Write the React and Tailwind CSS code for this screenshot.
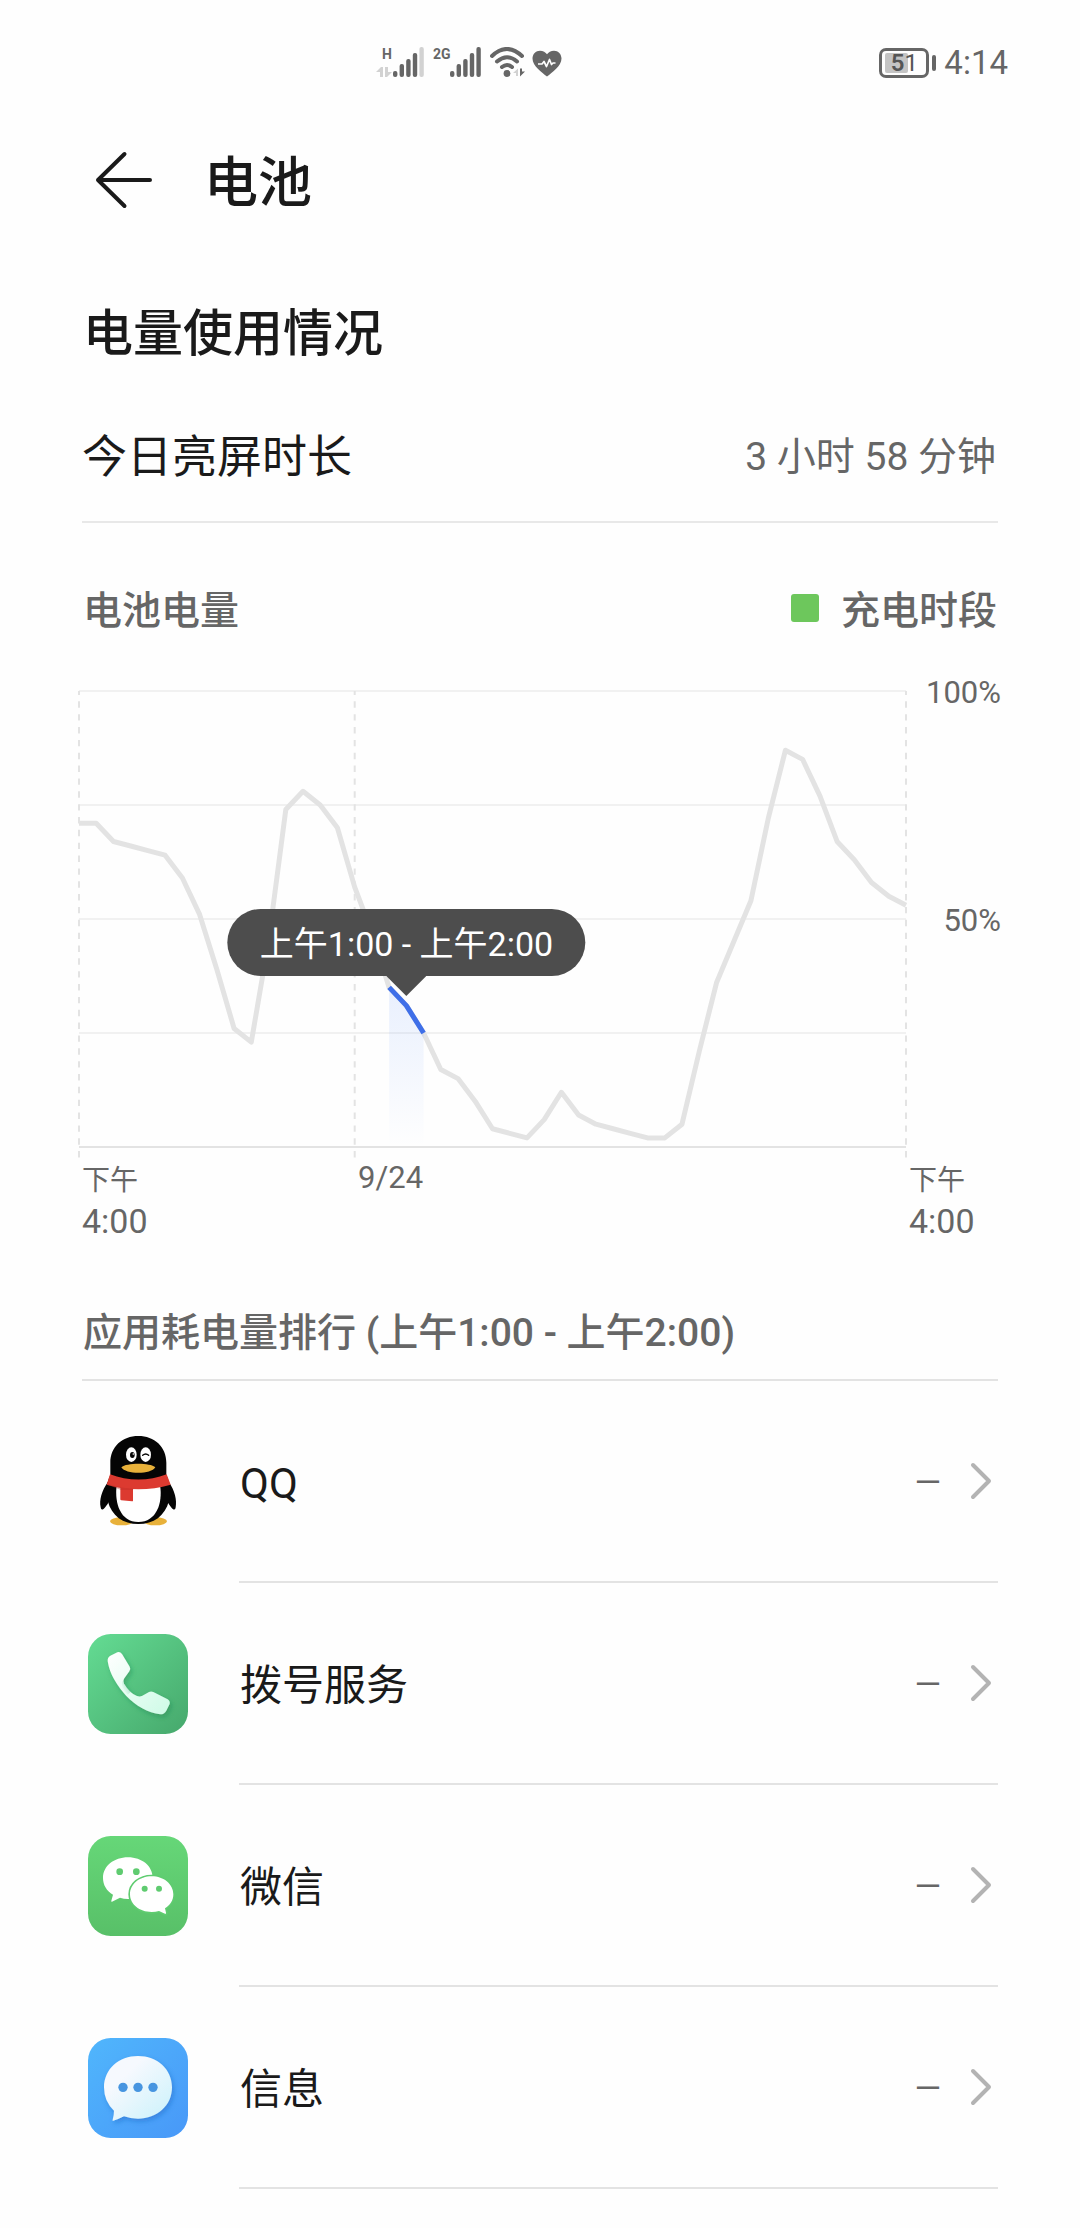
import React from "react";

const LEVELS = [
  71, 71, 67, 66, 65, 64, 59, 51, 39, 26, 23, 45, 74, 78, 75, 70, 57, 47, 35, 31, 25, 17, 15, 10, 4,
  3, 2, 6, 12, 7, 5, 4, 3, 2, 2, 5, 21, 36, 45, 54, 72, 87, 85, 77, 67, 63, 58, 55, 53,
];
const PLOT_W = 827;
const PLOT_H = 456;
const FIRST = 18;
const LAST = 20;

const point = (level, i) => [
  Math.round((i * PLOT_W * 10) / (LEVELS.length - 1)) / 10,
  Math.round(PLOT_H * (100 - level)) / 100,
];
const POINTS = LEVELS.map(point);
const toText = (list) => list.map((p) => p.join(",")).join(" ");

function SignalBars({ weak }) {
  const tops = [24, 17, 12, 6, 0];
  return (
    <svg width="31" height="30" viewBox="0 0 31 30" aria-hidden="true">
      {tops.map((top, i) => (
        <rect
          key={top}
          x={i * 6.6}
          y={top}
          width="4.4"
          height={30 - top}
          rx="2"
          fill={weak && i === 4 ? "#d2d2d2" : "#666"}
        />
      ))}
    </svg>
  );
}

function StatusBar() {
  return (
    <header className="grid h-[124px] grid-cols-[1fr_auto_1fr] items-center text-[#666]">
      <div className="col-start-2 -ml-[142px] flex items-center">
        <div className="flex h-[30px] w-[16px] flex-col items-end justify-between">
          <span className="text-[14px] leading-[14px] font-bold">H</span>
          <svg width="16" height="10" viewBox="0 0 16 10" fill="#d2d2d2" aria-hidden="true">
            <path d="M0 5 5 0H7V10H4V5ZM9 0H12V5H16L11 10H9Z" />
          </svg>
        </div>
        <div className="ml-[1px] flex">
          <SignalBars weak />
        </div>
        <div className="ml-[9px] flex h-[30px] items-start">
          <span className="w-[17px] text-[14px] leading-[14px] font-bold">2G</span>
        </div>
        <SignalBars />
        <svg className="ml-[9px]" width="36" height="30" viewBox="0 0 36 30" fill="none" aria-hidden="true">
          <path d="M2 9Q17 -5 32 9" stroke="#666" strokeWidth="4" strokeLinecap="round" />
          <path d="M7 14.500Q17 6 27 14.500" stroke="#666" strokeWidth="4" strokeLinecap="round" />
          <path d="M12 20Q17 16 22 20" stroke="#666" strokeWidth="4" strokeLinecap="round" />
          <circle cx="17" cy="26.500" r="3.400" fill="#666" />
          <path d="M23 26 28 21.500V29H26V26Z" fill="#d2d2d2" />
          <path d="M30 21.500H32V24.500H35L30 29.500Z" fill="#666" />
        </svg>
        <svg className="mt-[3px] ml-[6px]" width="30" height="27" viewBox="0 0 30 27" fill="none" aria-hidden="true">
          <path d="M15 26.500C10 22.500 .5 16 .5 8.500C.5 4 3.800 .7 8 .7C11 .7 13.700 2.200 15 4.300C16.300 2.200 19 .7 22 .7C26.200 .7 29.500 4 29.500 8.500C29.500 16 20 22.500 15 26.500Z" fill="#666" />
          <path d="M6 14H10L12 11.500L14.500 16.500L17.500 9.500L19.500 14.500L21 13H23.500" stroke="#fefefe" strokeWidth="1.700" strokeLinejoin="round" />
        </svg>
      </div>
      <div className="col-start-3 flex items-center justify-end pt-[2px] pr-[72px]">
        <div className="relative flex h-[30px] w-[50px] items-center justify-center rounded-[7px] border-[3px] border-[#666]">
          <div className="absolute top-[2px] bottom-[2px] left-[3px] w-[23px] rounded-[2px] bg-[#c4c4c4]" />
          <span className="relative text-[24px] leading-[24px] text-[#555]">
            <b className="font-semibold">5</b>1
          </span>
        </div>
        <div className="ml-[3px] h-[16px] w-[4px] rounded-full bg-[#666]" />
        <span className="ml-[8px] text-[33px] leading-[40px]">4:14</span>
      </div>
    </header>
  );
}

function Chart() {
  const [x0] = POINTS[FIRST];
  const [x1] = POINTS[LAST];
  const active = POINTS.slice(FIRST, LAST + 1);
  return (
    <div className="-mx-[3px] mt-[51px] text-[#666]">
      <div className="flex">
        <div className="relative flex-1">
          <svg className="block h-auto w-full overflow-visible" viewBox="0 0 827 468" fill="none" role="img" aria-label="电池电量">
            <defs>
              <linearGradient id="slot" x1="0" y1="0" x2="0" y2="1">
                <stop offset="0" stopColor="#3f7cf8" stopOpacity=".11" />
                <stop offset="1" stopColor="#3f7cf8" stopOpacity="0" />
              </linearGradient>
            </defs>
            {[0, 114, 228, 342].map((y) => (
              <path key={y} d={`M0 ${y}H827`} stroke="#f1f1f1" strokeWidth="2" />
            ))}
            <path d="M0 456H827" stroke="#e3e3e3" strokeWidth="2" />
            {[0, 275.7, 827].map((x) => (
              <path key={x} d={`M${x} 0V468`} stroke="#e3e3e3" strokeWidth="2" strokeDasharray="6.400 6.450" strokeDashoffset="2.500" />
            ))}
            <polyline points={toText(POINTS)} stroke="#e3e3e3" strokeWidth="5" strokeLinejoin="round" />
            <polygon points={`${toText(active)} ${x1},456 ${x0},456`} fill="url(#slot)" />
            <polyline points={toText(active)} stroke="#3f6fe8" strokeWidth="5" strokeLinejoin="round" />
          </svg>
          <div className="absolute top-[218px] left-[39.6%] flex -translate-x-1/2 flex-col items-center">
            <div className="rounded-full bg-[#4d4d4d] px-[32px] pt-[3px] text-[34px] leading-[64px] whitespace-nowrap text-white">
              上午1:00 - 上午2:00
            </div>
            <svg className="block" width="40" height="20" viewBox="0 0 40 20" aria-hidden="true">
              <path d="M0 0H40L20 20Z" fill="#4d4d4d" />
            </svg>
          </div>
        </div>
        <div className="flex w-[95px] flex-col items-end gap-[188px] text-[31px] leading-[40px]">
          <span className="-mt-[18px]">100%</span>
          <span>50%</span>
        </div>
      </div>
      <div className="grid grid-cols-[276fr_551fr_95px] leading-[40px]">
        <div className="pt-[2px] pl-[3px]">
          <div className="text-[28px]">下午</div>
          <div className="text-[34px]">4:00</div>
        </div>
        <div className="pl-[3px] text-[31px] leading-[38px]">9/24</div>
        <div className="pt-[2px] pl-[3px]">
          <div className="text-[28px]">下午</div>
          <div className="text-[34px]">4:00</div>
        </div>
      </div>
    </div>
  );
}

function QQIcon() {
  return (
    <svg width="100" height="100" viewBox="25 36 300 300" aria-hidden="true">
      <ellipse cx="126" cy="304" rx="35" ry="12" fill="#e8b13a" />
      <ellipse cx="227" cy="304" rx="35" ry="12" fill="#e8b13a" />
      <path d="M85 185C66 212 58 240 63 262C65 274 72 270 86 248ZM267 185C286 212 292 240 288 262C286 274 279 270 265 248Z" fill="#050505" />
      <path d="M92 165V128C92 80 128 48 176 48C224 48 260 80 260 128V165C272 190 274 220 268 242C256 288 222 312 176 312C130 312 96 288 84 242C78 220 80 190 92 165Z" fill="#050505" />
      <path d="M111 195C104 250 122 306 176 306C230 306 250 250 241 195Z" fill="#fff" />
      <path d="M91 163C145 184 208 184 261 163L273 194C210 212 142 212 81 194Z" fill="#dc3a30" />
      <path d="M122 198H160V242Q160 244 157 244L125 241Q122 241 122 238Z" fill="#dc3a30" />
      <path d="M83 190C100 198 128 205 160 206L161 210H124L83 194Z" fill="#b92a24" opacity=".35" />
      <ellipse cx="155" cy="104" rx="16" ry="22" fill="#fff" />
      <ellipse cx="198" cy="104" rx="16" ry="22" fill="#fff" />
      <ellipse cx="158" cy="105" rx="7" ry="9" fill="#050505" />
      <circle cx="161" cy="102" r="2.500" fill="#fff" />
      <path d="M189 106Q198 98 207 106" fill="none" stroke="#050505" strokeWidth="4" strokeLinecap="round" />
      <path d="M125 142C140 128 212 128 227 142C215 164 137 164 125 142Z" fill="#e8b13a" />
    </svg>
  );
}

function PhoneIcon() {
  return (
    <svg width="100" height="100" viewBox="25 26 300 300" aria-hidden="true">
      <defs>
        <linearGradient id="phoneBg" x1="0" y1="0" x2="1" y2="1">
          <stop offset="0" stopColor="#64dc93" />
          <stop offset="1" stopColor="#46a86c" />
        </linearGradient>
        <linearGradient id="phoneFg" x1="0" y1="0" x2="1" y2="1">
          <stop offset="0" stopColor="#ffffff" />
          <stop offset="1" stopColor="#cdfbe6" />
        </linearGradient>
        <linearGradient id="phoneShade" x1="1" y1="0" x2="0" y2="1">
          <stop offset="0" stopColor="#55b890" stopOpacity=".8" />
          <stop offset="1" stopColor="#d8fbea" stopOpacity="0" />
        </linearGradient>
        <filter id="phoneShadow" x="-20%" y="-20%" width="150%" height="150%">
          <feDropShadow dx="6" dy="8" stdDeviation="8" floodColor="#1f7a4a" floodOpacity=".4" />
        </filter>
      </defs>
      <rect x="25" y="26" width="300" height="300" rx="68" fill="url(#phoneBg)" />
      <path
        d="M92 91L113 81Q121 78 127 86L150 124Q154 131 149 138L133 160Q129 167 133 175C143 192 156 205 172 212Q181 215 188 211L208 200Q214 197 221 200L264 222Q272 227 270 236L260 256Q254 267 242 267C205 263 168 241 140 212C112 181 90 147 84 108Q83 96 92 91Z"
        fill="url(#phoneFg)"
        filter="url(#phoneShadow)"
      />
      <path d="M133 160Q129 167 133 175Q141 190 153 200L144 208Q128 190 127 178Q127 168 133 160Z" fill="url(#phoneShade)" />
    </svg>
  );
}

function WeChatIcon() {
  return (
    <svg width="100" height="100" viewBox="25 32 300 300" aria-hidden="true">
      <defs>
        <linearGradient id="wechatBg" x1="0" y1="0" x2="0" y2="1">
          <stop offset="0" stopColor="#66d778" />
          <stop offset="1" stopColor="#58c068" />
        </linearGradient>
      </defs>
      <rect x="25" y="32" width="300" height="300" rx="68" fill="url(#wechatBg)" />
      <path d="M145 96C187 96 219 122 219 158C219 194 187 221 145 221Q132 221 121 217L97 229Q94 230 95 226L100 208C81 197 70 179 70 158C70 122 103 96 145 96Z" fill="#fff" />
      <path d="M216 153C253 153 281 177 281 207C281 225 272 239 256 249L259 262Q260 267 256 265L238 257Q228 260 216 260C179 260 151 237 151 207C151 177 179 153 216 153Z" fill="#fff" stroke="#5fcc70" strokeWidth="10" paintOrder="stroke" />
      <g fill="#5fcb70">
        <circle cx="120" cy="139" r="10" />
        <circle cx="170" cy="139" r="10" />
        <circle cx="195" cy="190" r="9" />
        <circle cx="238" cy="190" r="9" />
      </g>
    </svg>
  );
}

function MessageIcon() {
  return (
    <svg width="100" height="100" viewBox="25 40 300 300" aria-hidden="true">
      <defs>
        <linearGradient id="msgBg" x1="0" y1="0" x2="1" y2="1">
          <stop offset="0" stopColor="#50b6fc" />
          <stop offset="1" stopColor="#4898f8" />
        </linearGradient>
        <linearGradient id="msgFg" x1="0" y1="0" x2="1" y2="1">
          <stop offset=".3" stopColor="#f6f9fe" />
          <stop offset="1" stopColor="#c9f1fb" />
        </linearGradient>
        <filter id="msgShadow" x="-20%" y="-20%" width="150%" height="150%">
          <feDropShadow dx="5" dy="8" stdDeviation="8" floodColor="#1c58b8" floodOpacity=".4" />
        </filter>
      </defs>
      <rect x="25" y="40" width="300" height="300" rx="68" fill="url(#msgBg)" />
      <path d="M175 94C232 94 277 133 277 188C277 243 232 282 175 282Q152 282 133 275Q118 283 101 288Q97 289 99 285Q103 272 103 258Q73 230 73 188C73 133 118 94 175 94Z" fill="url(#msgFg)" filter="url(#msgShadow)" />
      <g fill="#4795e0">
        <circle cx="130" cy="188" r="14" />
        <circle cx="175" cy="188" r="14" />
        <circle cx="220" cy="188" r="14" />
      </g>
    </svg>
  );
}

const APPS = [
  { name: "QQ", Icon: QQIcon },
  { name: "拨号服务", Icon: PhoneIcon },
  { name: "微信", Icon: WeChatIcon },
  { name: "信息", Icon: MessageIcon },
];

export default function App() {
  return (
    <div className="min-h-screen bg-[#fefefe] font-[Roboto,'Noto_Sans_CJK_SC',sans-serif] text-[#1a1a1a]">
      <StatusBar />
      <div className="flex h-[116px] items-center px-[82px]">
        <button type="button" aria-label="返回" className="ml-[12px] -mt-[4px]">
          <svg width="60" height="60" viewBox="0 0 60 60" fill="none" stroke="#1a1a1a" strokeWidth="4" strokeLinecap="round" strokeLinejoin="round">
            <path d="M56 30H4M30.500 4L4 30L30.500 56" />
          </svg>
        </button>
        <h1 className="ml-[50px] pt-[4px] text-[54px] leading-[60px] font-medium">电池</h1>
      </div>
      <main className="px-[82px]">
        <h2 className="mt-[64px] pl-[1px] text-[50px] leading-[60px] font-medium">电量使用情况</h2>
        <div className="mt-[26px] flex h-[133px] items-center justify-between border-b-2 border-[#e8e8e8]">
          <span className="pt-[4px] text-[45px] leading-[60px]">今日亮屏时长</span>
          <span className="pt-[2px] pr-[2px] text-[39px] leading-[60px] text-[#666]">3 小时 58 分钟</span>
        </div>
        <div className="mt-[58px] flex items-center justify-between text-[39px] leading-[60px] font-medium text-[#666]">
          <h3 className="pl-[1px]">电池电量</h3>
          <div className="flex items-center gap-[22px] pr-[1px]">
            <span className="-mt-[6px] size-[28px] rounded-[3px] bg-[#6dc75c]" />
            <span>充电时段</span>
          </div>
        </div>
        <div className="-mt-[1px]">
          <Chart />
        </div>
        <h3 className="mt-[62px] mb-[16px] pl-[1px] text-[39px] leading-[60px] font-medium text-[#666]">
          应用耗电量排行 (上午1:00 - 上午2:00)
        </h3>
        <ul className="border-t-2 border-[#e3e3e3]">
          {APPS.map(({ name, Icon }) => (
            <li key={name}>
              <button type="button" className="flex w-full items-stretch gap-[51px] pl-[6px] text-left">
                <span className="flex items-center">
                  <Icon />
                </span>
                <span className="flex h-[202px] flex-1 items-center border-b-2 border-[#e3e3e3]">
                  <span className="flex-1 pt-[5px] pl-[1px] text-[42px] leading-[60px]">{name}</span>
                  <span className="pt-[2px] text-[34px] leading-[60px] text-[#666]">—</span>
                  <svg className="mr-[5px] ml-[28px]" width="24" height="40" viewBox="0 0 24 40" fill="none" stroke="#b3b3b3" strokeWidth="4" strokeLinecap="round" strokeLinejoin="round" aria-hidden="true">
                    <path d="M4 4L20 20L4 36" />
                  </svg>
                </span>
              </button>
            </li>
          ))}
        </ul>
      </main>
    </div>
  );
}
